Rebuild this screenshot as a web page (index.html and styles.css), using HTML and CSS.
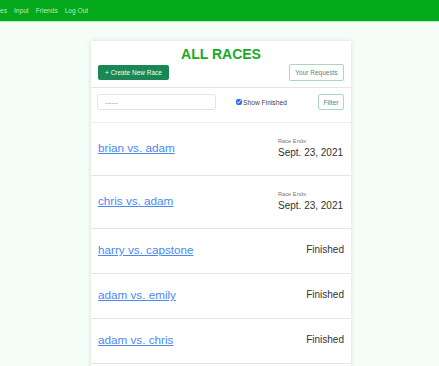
FILE: index.html
```html
<!DOCTYPE html>
<html>
<head>
<meta charset="utf-8">
<link rel="stylesheet" href="styles.css">
</head>
<body>
<nav class="navbar">
  <ul class="nav-list">
    <li class="nav-item first">Races</li>
    <li class="nav-item">Input</li>
    <li class="nav-item">Friends</li>
    <li class="nav-item">Log Out</li>
  </ul>
</nav>
<main class="page">
  <section class="card">
    <header class="card-head">
      <h1 class="title">ALL RACES</h1>
      <div class="actions">
        <a class="btn btn-solid">+ Create New Race</a>
        <a class="btn btn-outline btn-req">Your Requests</a>
      </div>
    </header>
    <form class="filters">
      <input class="search" type="text" placeholder="------">
      <label class="check"><input type="checkbox" checked><span>Show Finished</span></label>
      <button class="btn btn-outline btn-filter" type="button">Filter</button>
    </form>
    <ul class="races">
      <li class="race race-live">
        <a class="race-link" href="#">brian vs. adam</a>
        <div class="race-end"><span class="end-label">Race Ends:</span><span class="end-date">Sept. 23, 2021</span></div>
      </li>
      <li class="race race-live">
        <a class="race-link" href="#">chris vs. adam</a>
        <div class="race-end"><span class="end-label">Race Ends:</span><span class="end-date">Sept. 23, 2021</span></div>
      </li>
      <li class="race">
        <a class="race-link" href="#">harry vs. capstone</a>
        <span class="finished">Finished</span>
      </li>
      <li class="race">
        <a class="race-link" href="#">adam vs. emily</a>
        <span class="finished">Finished</span>
      </li>
      <li class="race">
        <a class="race-link" href="#">adam vs. chris</a>
        <span class="finished">Finished</span>
      </li>
    </ul>
  </section>
</main>
</body>
</html>
```

FILE: styles.css
```css
* { box-sizing: border-box; }
html, body { margin: 0; padding: 0; }
body {
  font-family: "Liberation Sans", Arial, sans-serif;
  background: #f4fdf7;
  overflow: hidden;
  height: 366px;
}
.navbar {
  background: #03a91a;
  height: 22px;
  border-bottom: 1px solid #b9e8bf;
}
.nav-list {
  list-style: none;
  margin: 0;
  padding: 0;
  display: flex;
  gap: 7px;
  height: 21px;
  align-items: center;
}
.nav-item {
  font-size: 6.6px;
  color: rgba(235, 255, 235, 0.78);
}
.nav-item.first { margin-left: -11.7px; }

.page {
  display: flex;
  justify-content: center;
  padding-top: 19px;
  padding-left: 3px;
}
.card {
  width: 260px;
  background: #fff;
  box-shadow: 0 0 5px rgba(0, 0, 0, 0.13);
  padding-bottom: 20px;
}
.card-head {
  padding: 5px 7px 6px;
  border-bottom: 1px solid #e6e6e6;
}
.title {
  margin: 0;
  text-align: center;
  font-size: 14px;
  line-height: 17px;
  font-weight: bold;
  color: #19a828;
}
.actions {
  margin-top: 1px;
  display: flex;
  justify-content: space-between;
  align-items: center;
}
.btn {
  display: inline-flex;
  align-items: center;
  justify-content: center;
  font-family: inherit;
  font-size: 6.5px;
  border-radius: 2px;
  text-decoration: none;
  cursor: pointer;
}
.btn-solid {
  background: #1b8755;
  color: #eafff2;
  height: 15px;
  width: 71px;
}
.btn-outline {
  background: #fff;
  border: 1.5px solid #a9d8bf;
  color: #5f8474;
}
.btn-req { height: 17px; width: 55px; }
.btn-filter { height: 16px; width: 26px; padding: 0; font-size: 6.8px; }

.filters {
  margin: 0;
  padding: 6px 7px 12px 6px;
  display: flex;
  align-items: center;
  border-bottom: 1px solid #ececec;
}
.search {
  width: 119px;
  height: 16px;
  border: 1px solid #e4e4e4;
  border-radius: 2px;
  font-family: inherit;
  font-size: 6.5px;
  padding: 0 7px;
  outline: none;
}
.search::placeholder { color: #9a9a9a; }
.check {
  margin-left: 20px;
  display: flex;
  align-items: center;
  font-size: 6.7px;
  color: #444;
}
.check input {
  width: 5.5px;
  height: 5.5px;
  margin: 0 1.5px 0 0;
  accent-color: #2f6fe8;
}
.btn-filter { margin-left: auto; }

.races {
  list-style: none;
  margin: 0;
  padding: 0;
}
.race {
  display: flex;
  justify-content: space-between;
  align-items: center;
  padding: 0 7px 3px;
  height: 45px;
  border-bottom: 1px solid #e6e6e6;
}
.race-live { height: 53px; padding-bottom: 3px; }
.race-link {
  font-size: 11.7px;
  color: #4a89f3;
  text-decoration: underline;
}
.race-end {
  display: flex;
  flex-direction: column;
  width: 66px;
}
.end-label {
  font-size: 5.7px;
  color: #777;
  line-height: 8px;
}
.end-date {
  margin-top: 2px;
  font-size: 10px;
  line-height: 12px;
  color: #333;
  white-space: nowrap;
}
.finished {
  font-size: 10px;
  color: #333;
}
```
